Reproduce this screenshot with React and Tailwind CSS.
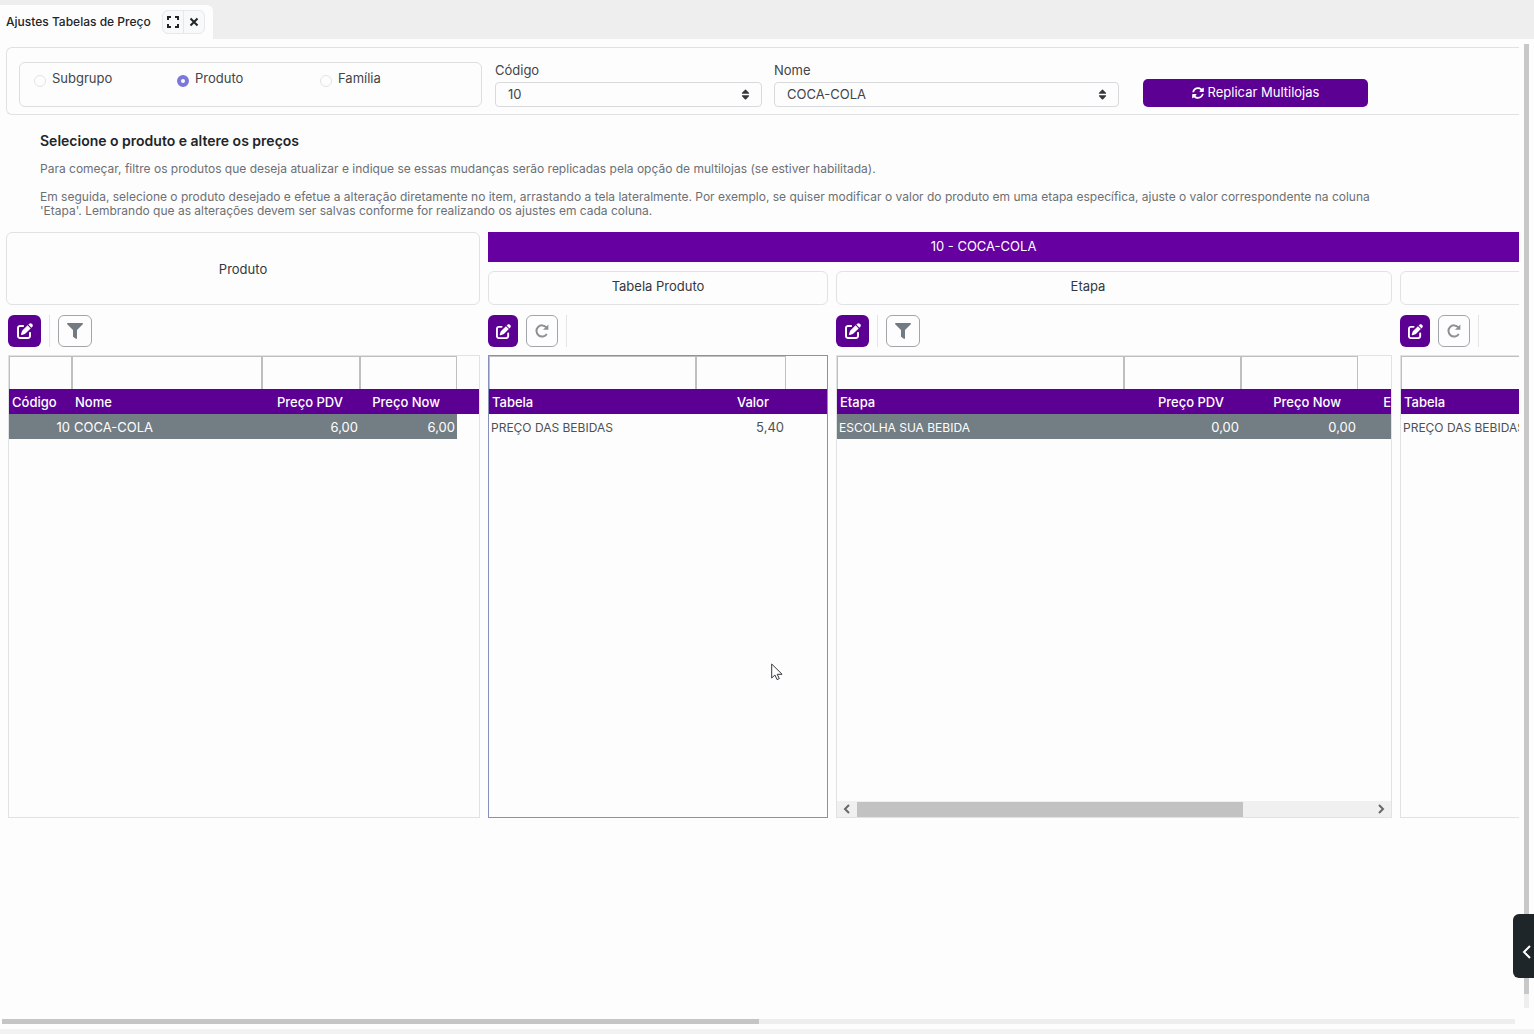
import React, { useState } from 'react';
import { FaSort, FaSyncAlt, FaFilter } from 'react-icons/fa';
import { FaPenToSquare } from 'react-icons/fa6';

const MODES = ['Subgrupo', 'Produto', 'Família'];

const productColumns = [
    { label: 'Código', width: 63, align: 'right', headAlign: 'left' },
    { label: 'Nome', width: 190, align: 'left' },
    { label: 'Preço PDV', width: 98, align: 'right' },
    { label: 'Preço Now', width: 97, align: 'right' },
];

const tableColumns = [
    { label: 'Tabela', width: 207, align: 'left', small: true },
    { label: 'Valor', width: 90, align: 'right' },
];

const stepColumns = [
    { label: 'Etapa', width: 287, align: 'left', small: true },
    { label: 'Preço PDV', width: 117, align: 'right' },
    { label: 'Preço Now', width: 117, align: 'right' },
];

const stepTableColumns = [{ label: 'Tabela', width: 207, align: 'left', small: true }];

const Divider = () => <span className="h-8 w-px bg-[#e4e5e7]" />;

const EditButton = ({ compact }) => (
    <button
        type="button"
        aria-label="Editar"
        className={`flex h-8 items-center justify-center rounded-md bg-[#5c0094] text-white ${compact ? 'w-[30px]' : 'w-[33px]'}`}
    >
        <FaPenToSquare className={compact ? 'size-[15px]' : 'size-4'} />
    </button>
);

const FilterToolbar = () => (
    <div className="flex items-center gap-2">
        <EditButton />
        <Divider />
        <button
            type="button"
            aria-label="Filtrar"
            className="flex h-8 w-[34px] items-center justify-center rounded-md border border-[#a3a6a9] text-[#737b82]"
        >
            <FaFilter className="size-4" />
        </button>
    </div>
);

const RefreshToolbar = () => (
    <div className="flex items-center gap-2">
        <EditButton compact />
        <button
            type="button"
            aria-label="Atualizar"
            className="flex h-8 w-8 items-center justify-center rounded-md border border-[#a3a6a9] text-[#8b9095]"
        >
            <svg viewBox="0 0 16 16" className="size-4" fill="none" stroke="currentColor" strokeWidth="2">
                <path d="M12.8 11A5.6 5.6 0 1 1 12.4 4.4" />
                <path d="M14.4 1.4v5.4H9z" fill="currentColor" stroke="none" />
            </svg>
        </button>
        <Divider />
    </div>
);

const DataGrid = ({ columns, row, selected, focused, fillRow, extra, children }) => {
    const rowColor = selected ? 'bg-[#737d84] text-white' : 'text-[#4d5154]';

    return (
        <div className={`flex h-[463px] flex-col overflow-hidden border ${focused ? 'border-[#8790bd]' : 'border-[#e0e2e4]'}`}>
            <table className="w-full table-fixed border-collapse text-[13px]">
                <colgroup>
                    {columns.map((col) => (
                        <col key={col.label} style={{ width: col.width }} />
                    ))}
                    <col />
                </colgroup>
                <thead>
                    <tr className="h-[33px]">
                        {columns.map((col) => (
                            <td key={col.label} className="p-0">
                                <input
                                    type="text"
                                    aria-label={`Filtrar ${col.label}`}
                                    className="block h-[33px] w-full border border-b-0 border-[#bfbfbf] px-1 outline-none"
                                />
                            </td>
                        ))}
                        <td />
                    </tr>
                    <tr className="h-[25px] bg-[#5c0094] text-white">
                        {columns.map((col) => (
                            <th
                                key={col.label}
                                className={`pt-[2px] pb-0 pl-[3px] font-medium whitespace-nowrap ${(col.headAlign || col.align) === 'right' ? 'pr-[17px] text-right' : 'text-left'}`}
                            >
                                {col.label}
                            </th>
                        ))}
                        <th className="overflow-hidden pt-[2px] pb-0 text-right font-medium">{extra}</th>
                    </tr>
                </thead>
                <tbody>
                    <tr className="h-[25px]">
                        {row.map((value, i) => (
                            <td
                                key={columns[i].label}
                                className={`px-[2px] pt-[2px] pb-0 whitespace-nowrap ${rowColor} ${columns[i].align === 'right' ? 'text-right' : 'text-left'} ${columns[i].small ? 'text-xs' : ''}`}
                            >
                                {value}
                            </td>
                        ))}
                        <td className={fillRow ? rowColor : ''} />
                    </tr>
                </tbody>
            </table>
            {children}
        </div>
    );
};

const GridScrollbar = () => (
    <div className="mt-auto flex h-4 items-center bg-[#f0f0f0] text-[#66696b]">
        <button type="button" aria-label="Rolar para a esquerda" className="flex h-4 w-5 items-center justify-center">
            <svg viewBox="0 0 10 10" className="size-[10px]" fill="none" stroke="currentColor" strokeWidth="2">
                <path d="M7 1 3 5l4 4" />
            </svg>
        </button>
        <div className="h-[15px] flex-1">
            <div className="h-full w-3/4 bg-[#c2c2c2]" />
        </div>
        <button type="button" aria-label="Rolar para a direita" className="flex h-4 w-5 items-center justify-center">
            <svg viewBox="0 0 10 10" className="size-[10px]" fill="none" stroke="currentColor" strokeWidth="2">
                <path d="m3 1 4 4-4 4" />
            </svg>
        </button>
    </div>
);

const PanelTitle = ({ className = '', children }) => (
    <h2 className={`flex h-[34px] items-center justify-center rounded-md border border-[#e0e2e4] pb-[2px] text-[13px] text-[#33383c] ${className}`}>
        {children}
    </h2>
);

const SelectField = ({ id, label, value, className }) => (
    <div className={className}>
        <label htmlFor={id} className="block h-5 text-[13px] leading-4 text-[#404549]">
            {label}
        </label>
        <div className="relative">
            <select
                id={id}
                defaultValue={value}
                className="block h-[25px] w-full appearance-none rounded border border-[#d8dadc] px-3 text-[13px] text-[#404549]"
            >
                <option>{value}</option>
            </select>
            <FaSort className="pointer-events-none absolute top-[6px] right-[10px] size-[13px] text-[#33383c]" />
        </div>
    </div>
);

const TabBar = () => (
    <header className="flex h-[39px] shrink-0 items-end bg-[#eeeeee]">
        <div className="flex h-[34px] w-[213px] items-center justify-between rounded-tr-md bg-[#fdfdfd] pr-2 pl-[6px]">
            <span className="text-xs font-medium whitespace-nowrap text-[#212529]">Ajustes Tabelas de Preço</span>
            <div className="flex h-6 w-[43px] divide-x divide-[#e6e8eb] rounded-md border border-[#e6e8eb] bg-[#f8f9fa]">
                <button type="button" aria-label="Tela cheia" className="flex flex-1 items-center justify-center text-[#212529]">
                    <svg viewBox="0 0 12 12" className="size-3" fill="none" stroke="currentColor" strokeWidth="2">
                        <path d="M1 4V1h3M8 1h3v3M11 8v3H8M4 11H1V8" />
                    </svg>
                </button>
                <button type="button" aria-label="Fechar" className="flex flex-1 items-center justify-center text-[#212529]">
                    <svg viewBox="0 0 10 10" className="size-[10px]" fill="none" stroke="currentColor" strokeWidth="2">
                        <path d="m1.5 1.5 7 7M8.5 1.5l-7 7" />
                    </svg>
                </button>
            </div>
        </div>
    </header>
);

const FilterBar = () => {
    const [mode, setMode] = useState('Produto');

    return (
        <section className="flex h-[68px] items-start rounded-l-md border border-r-0 border-[#dfe1e3] pt-[14px] pl-3">
            <fieldset className="grid h-[45px] w-[463px] grid-cols-[143px_143px_1fr] rounded-md border border-[#dcdee0] pl-[14px]">
                {MODES.map((name) => (
                    <label key={name} className="flex h-8 items-center gap-[6px] text-[13px] text-[#404549]">
                        <input
                            type="radio"
                            name="mode"
                            checked={mode === name}
                            onChange={() => setMode(name)}
                            className="mt-1 size-3 appearance-none rounded-full border border-[#e2e4e6] checked:border-4 checked:border-[#7a78dc]"
                        />
                        {name}
                    </label>
                ))}
            </fieldset>
            <SelectField id="codigo" label="Código" value="10" className="ml-[13px] w-[267px]" />
            <SelectField id="nome" label="Nome" value="COCA-COLA" className="ml-3 w-[345px]" />
            <button
                type="button"
                className="mt-[17px] ml-6 flex h-7 w-[225px] items-center justify-center gap-1 rounded-[5px] bg-[#5c0094] text-[13px] text-white"
            >
                <FaSyncAlt className="size-3" />
                Replicar Multilojas
            </button>
        </section>
    );
};

const App = () => {
    return (
        <div className="flex h-screen flex-col overflow-hidden bg-[#fdfdfd] font-['Inter',sans-serif]">
            <TabBar />

            <div className="flex min-h-0 flex-1">
                <main className="min-w-0 flex-1 overflow-hidden pt-2 pl-[6px]">
                    <FilterBar />

                    {/* Instructions */}
                    <div className="pt-4 pr-28 pb-[14px] pl-[34px] text-xs leading-[14px] text-[#6c7074]">
                        <h1 className="mb-[11px] text-sm leading-5 font-semibold text-[#212529]">
                            Selecione o produto e altere os preços
                        </h1>
                        <p className="mb-[14px]">
                            Para começar, filtre os produtos que deseja atualizar e indique se essas mudanças serão replicadas pela opção de multilojas (se estiver habilitada).
                        </p>
                        <p>
                            Em seguida, selecione o produto desejado e efetue a alteração diretamente no item, arrastando a tela lateralmente. Por exemplo, se quiser modificar o valor do produto em uma etapa específica, ajuste o valor correspondente na coluna 'Etapa'. Lembrando que as alterações devem ser salvas conforme for realizando os ajustes em cada coluna.
                        </p>
                    </div>

                    {/* Price grids */}
                    <div className="flex gap-2">
                        <section className="w-[474px] shrink-0">
                            <h2 className="flex h-[73px] items-center justify-center rounded-md border border-[#e0e2e4] pt-[2px] text-[13px] text-[#33383c]">
                                Produto
                            </h2>
                            <div className="flex flex-col gap-2 pt-[10px] pl-[2px]">
                                <FilterToolbar />
                                <DataGrid columns={productColumns} row={['10', 'COCA-COLA', '6,00', '6,00']} selected />
                            </div>
                        </section>

                        <div className="min-w-0 flex-1 overflow-hidden">
                            <h2 className="flex h-[30px] items-center justify-center bg-[#6600a1] pr-10 text-[13px] text-white">
                                10 - COCA-COLA
                            </h2>
                            <div className="flex gap-2 pt-[9px]">
                                <section className="w-[340px] shrink-0">
                                    <PanelTitle>Tabela Produto</PanelTitle>
                                    <div className="flex flex-col gap-2 pt-[10px]">
                                        <RefreshToolbar />
                                        <DataGrid columns={tableColumns} row={['PREÇO DAS BEBIDAS', '5,40']} focused />
                                    </div>
                                </section>
                                <section className="w-[556px] shrink-0">
                                    <PanelTitle className="pr-[52px]">Etapa</PanelTitle>
                                    <div className="flex flex-col gap-2 pt-[10px]">
                                        <FilterToolbar />
                                        <DataGrid
                                            columns={stepColumns}
                                            row={['ESCOLHA SUA BEBIDA', '0,00', '0,00']}
                                            selected
                                            fillRow
                                            extra="E"
                                        >
                                            <GridScrollbar />
                                        </DataGrid>
                                    </div>
                                </section>
                                <section className="w-[340px] shrink-0">
                                    <PanelTitle />
                                    <div className="flex flex-col gap-2 pt-[10px]">
                                        <RefreshToolbar />
                                        <DataGrid columns={stepTableColumns} row={['PREÇO DAS BEBIDAS']} />
                                    </div>
                                </section>
                            </div>
                        </div>
                    </div>
                </main>

                {/* Vertical scrollbar */}
                <div className="flex w-[15px] shrink-0 justify-center pt-[5px]">
                    <div className="w-[5px] bg-[#eeeeee] pb-[14px]">
                        <div className="h-full bg-[#c8c8c8]" />
                    </div>
                </div>
            </div>

            {/* Horizontal scrollbar */}
            <div className="shrink-0 pt-[11px] pr-[19px] pb-[5px] pl-[2px]">
                <div className="h-[5px] bg-[#eeeeee]">
                    <div className="h-full w-1/2 bg-[#c5c5c5]" />
                </div>
            </div>
            <footer className="h-[5px] shrink-0 bg-[#f2f2f3]" />

            <button
                type="button"
                aria-label="Abrir painel"
                className="fixed right-0 bottom-14 flex h-16 w-[21px] items-center justify-end rounded-l-md bg-[#1f2629] pt-3 pr-[2px] text-white"
            >
                <svg viewBox="0 0 10 14" className="h-[14px] w-[10px]" fill="none" stroke="currentColor" strokeWidth="2">
                    <path d="M8 1 2 7l6 6" />
                </svg>
            </button>

            {/* Mouse pointer */}
            <svg
                viewBox="0 0 12 18"
                className="pointer-events-none fixed top-[663px] left-[771px] h-[18px] w-3"
                fill="#fff"
                stroke="#33383c"
                strokeWidth="1"
            >
                <path d="M.7 1v14l3.2-3 2.2 4.6 2.2-1-2.1-4.3h4.9z" />
            </svg>
        </div>
    );
};

export default App;
